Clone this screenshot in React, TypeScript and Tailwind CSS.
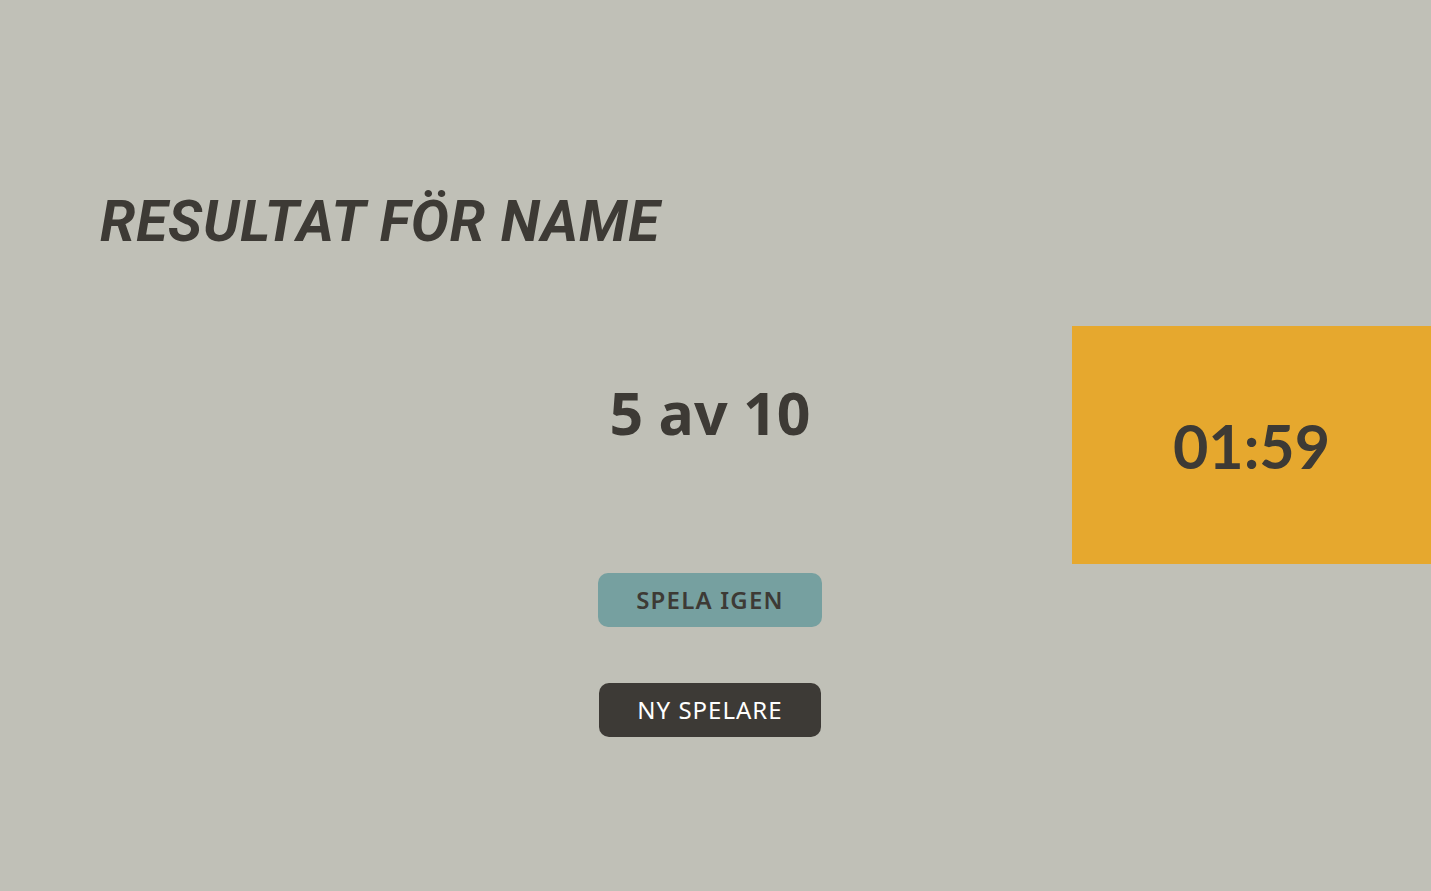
function Timer({ time }: { time: string }) {
  return (
    <div className="absolute right-0 top-[326px] flex h-[238px] w-[359px] items-center justify-center bg-[#e6a82e]">
      <span className="font-['Lato',sans-serif] text-[61px] font-bold leading-none text-[#3d3a35]">{time}</span>
    </div>
  );
}

export default function App() {
  return (
    <div className="relative min-h-[891px] w-full bg-[#c0c0b7] font-['Noto_Sans',sans-serif] text-[#3d3a35]">
      <h1 className="pl-[100px] pt-[193px] font-['Roboto',sans-serif] text-[57px] font-bold italic leading-none tracking-[0.8px]">
        RESULTAT FÖR NAME
      </h1>

      <div className="flex flex-col items-center pr-[11px]">
        <p className="mt-[133px] text-[59px] font-bold leading-none">5 av 10</p>

        <button className="mt-[131px] h-[54px] w-[224px] rounded-[10px] bg-[#76a0a0] text-[24px] font-semibold tracking-[1.2px] text-[#3d3a35]">
          SPELA IGEN
        </button>
        <button className="mt-[56px] h-[54px] w-[222px] rounded-[10px] bg-[#3d3a36] text-[24px] tracking-[1px] text-white">
          NY SPELARE
        </button>
      </div>

      <Timer time="01:59" />
    </div>
  );
}
